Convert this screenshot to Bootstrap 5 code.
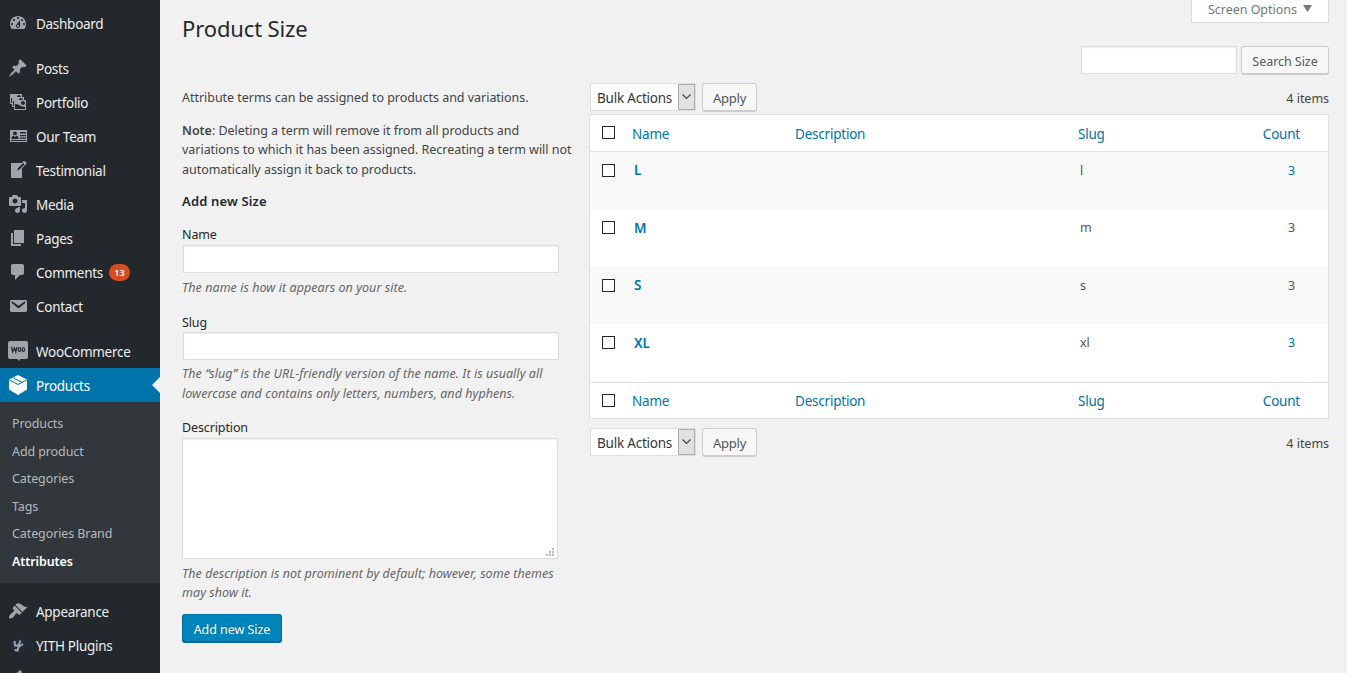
<!DOCTYPE html>
<html lang="en">
<head>
<meta charset="utf-8">
<title>Product Size</title>
<meta name="viewport" content="width=device-width, initial-scale=1">
<link href="https://cdn.jsdelivr.net/npm/bootstrap@5.3.0/dist/css/bootstrap.min.css" rel="stylesheet">
<style>
body{background:#f1f1f1;color:#444;font-family:"Noto Sans","Open Sans",sans-serif;font-size:12.5px;line-height:19.5px;letter-spacing:-.03px;height:673px;overflow:hidden}
a{text-decoration:none;color:#0073aa}
.side{width:160px;height:673px;background:#23282d;padding-top:6px;overflow:hidden}
.side .item{height:34px;padding:4px 0 0 8px;color:#eee;font-size:13.5px;letter-spacing:-.28px;position:relative}
.side .item svg{width:20px;height:20px;fill:#a0a5aa;margin:-4px 8px 0 0;flex:none}
.side .gap{margin-top:11px}
.side .current{background:#0073aa;color:#fff}
.side .current svg{fill:#fff}
.side .current::after{content:"";position:absolute;right:0;top:9px;border:8px solid transparent;border-left:0;border-right-color:#f1f1f1}
.sub{background:#32373c;height:181px;padding:8px 12px 0}
.sub a{height:27.6px;line-height:27px;color:#b4b9be;letter-spacing:-.1px}
.sub a.on{color:#fff;font-weight:600}
.count{background:#d54e21;color:#fff;font-size:9px;font-weight:600;line-height:17px;width:21px;letter-spacing:0;margin:-3px 0 0 6px}
.main{padding:0 18px 0 22px}
.opts{width:138px;height:23px;background:#fff;border:1px solid #ddd;border-top:0;color:#72777c;padding:0 16px;box-shadow:0 1px 1px -1px rgba(0,0,0,.1)}
h1{font-size:22px;line-height:29px;font-weight:400;color:#23282d;letter-spacing:-.13px;margin:14px 0 0}
.wpfield{background:#fff;border:1px solid #ddd;border-radius:0;box-shadow:inset 0 1px 2px rgba(0,0,0,.07);display:block;padding:2px 5px;outline:0}
.formcol{width:408px}
.formcol .wpfield{width:376px}
.formcol label{color:#23282d;display:block;height:20px;line-height:21px;letter-spacing:-.12px}
.formcol i{color:#666;display:block;white-space:nowrap;letter-spacing:.05px}
.wpbtn{height:29px;border:1px solid #ccc;border-bottom-width:2px;border-radius:3px;background:#f7f7f7;color:#555;font-size:12.5px;letter-spacing:-.05px;line-height:27px;padding:1px 0 0;flex:none}
.wpbtn.blue{background:#0085ba;border-color:#0073aa #006799 #006799;color:#fff;text-shadow:0 -1px 1px #006799;width:100px}
.wpbtn.apply{width:55px;font-size:13px;letter-spacing:-.22px}
.bulk{width:106px;height:28px;background:#fff;border:1px solid #ddd;color:#32373c;font-size:13.5px;letter-spacing:-.22px;padding-left:6px;margin-right:6px;margin-left:1px}
.bulk b{font-weight:400;padding-top:3px}
.bulk span{width:17px;height:26px;background:#e1e1e1;border:1px solid #adadad}
.terms{width:740px;table-layout:fixed;background:#fff;border:1px solid #e1e1e1;border-collapse:separate;border-spacing:0;margin:0;color:#555}
.terms th,.terms td{padding:0;vertical-align:top;font-weight:400}
.terms th,.terms td.t{font-size:13.5px;letter-spacing:-.22px}
.terms thead th{height:37px;border-bottom:1px solid #e1e1e1;padding-top:10px}
.terms tfoot th{height:36px;border-top:1px solid #e1e1e1;padding-top:9px}
.terms td{height:57px;padding-top:9px}
.terms tr.tall td{height:58px}
.terms tr.tall td.t{padding-top:10px}
.terms tbody tr:nth-child(odd) td{background:#f9f9f9}
.terms td.t{padding-left:2px;font-weight:600}
.terms .s{padding-left:2px}
.terms .n{padding-right:33px}
.cb{appearance:none;display:block;width:13px;height:13px;border:1px solid #23282d;background:#fff;margin:3px 0 0 12px}
thead .cb{margin-top:1px}
tfoot .cb{margin-top:2px}
</style>
</head>
<body>
<div class="d-flex">
<nav class="side flex-shrink-0">
  <a href="#" class="item d-flex align-items-center"><svg viewBox="0 0 20 20"><path d="M3.760 16h12.480c1.100-1.370 1.760-3.110 1.760-5 0-4.420-3.580-8-8-8s-8 3.580-8 8c0 1.890.66 3.630 1.760 5zM10 4c.55 0 1 .45 1 1s-.45 1-1 1-1-.45-1-1 .45-1 1-1zM6 6c.55 0 1 .45 1 1s-.45 1-1 1-1-.45-1-1 .45-1 1-1zm8 0c.55 0 1 .45 1 1s-.45 1-1 1-1-.45-1-1 .45-1 1-1zm-5.370 5.550L12 7v6c0 1.100-.9 2-2 2s-2-.9-2-2c0-.57.24-1.080.63-1.450zM4 10c.55 0 1 .45 1 1s-.45 1-1 1-1-.45-1-1 .45-1 1-1zm12 0c.55 0 1 .45 1 1s-.45 1-1 1-1-.45-1-1 .45-1 1-1zm-5 3c0-.55-.45-1-1-1s-1 .45-1 1 .45 1 1 1 1-.45 1-1z" fill-rule="evenodd"/></svg>Dashboard</a>
  <a href="#" class="item gap d-flex align-items-center"><svg viewBox="0 0 20 20"><path d="M10.440 3.020l1.820-1.820 6.360 6.350-1.830 1.820c-1.050-.68-2.480-.57-3.410.36l-.75.75c-.92.93-1.040 2.350-.35 3.410l-1.830 1.820-2.410-2.410-2.800 2.790c-.42.42-3.380 2.710-3.800 2.290s1.860-3.390 2.280-3.810l2.790-2.790L4.100 9.360l1.830-1.820c1.050.69 2.480.57 3.400-.36l.75-.75c.93-.92 1.050-2.350.36-3.410z"/></svg>Posts</a>
  <a href="#" class="item d-flex align-items-center"><svg viewBox="0 0 20 20"><path fill-rule="evenodd" d="M4 15v-3H2V2h12v3h2v3h2v10H6v-3H4zm7-12c-1.100 0-2 .9-2 2h4c0-1.100-.89-2-2-2zm-7 8V6H3v5h1zm7-3h4c0-1.100-.89-2-2-2-1.100 0-2 .9-2 2zm-5 6V9H5v5h1zm9-1c1.100 0 2-.89 2-2 0-1.100-.9-2-2-2s-2 .9-2 2c0 1.110.9 2 2 2zm2 4v-2c-5 0-5-3-10-3v5h10z"/></svg>Portfolio</a>
  <a href="#" class="item d-flex align-items-center"><svg viewBox="0 0 20 20"><path fill-rule="evenodd" d="M2 4h17v12H2zM12 6v1.500h6V6zM12 9v1.200h6V9zM12 11.500v1.200h6v-1.200zM3 14v1h15v-1z"/><g fill="#23282d"><circle cx="7" cy="7.300" r="1.900"/><path d="M3.500 13v-2l2-1.500L7 11l1.500-1.500 2 1.500v2z"/></g></svg>Our Team</a>
  <a href="#" class="item d-flex align-items-center"><svg viewBox="0 0 20 20"><path fill-rule="evenodd" d="M16.890 1.200l1.410 1.410c.39.39.39 1.020 0 1.410L14 8.330V18H3V3h10.670l1.800-1.800c.4-.39 1.030-.4 1.420 0zm-5.660 8.480l5.370-5.360-1.420-1.420-5.360 5.370-.71 2.120z"/></svg>Testimonial</a>
  <a href="#" class="item d-flex align-items-center"><svg viewBox="0 0 20 20"><path fill-rule="evenodd" d="M13 11V4c0-.55-.45-1-1-1h-1.670L9 1H5L3.670 3H2c-.55 0-1 .45-1 1v7c0 .55.45 1 1 1h10c.55 0 1-.45 1-1zM7 4.500c1.380 0 2.500 1.120 2.500 2.500S8.380 9.500 7 9.500 4.500 8.380 4.500 7 5.620 4.500 7 4.500zM14 6h5v10.500c0 1.380-1.120 2.500-2.500 2.500S14 17.880 14 16.500s1.120-2.500 2.500-2.500c.17 0 .34.02.5.05V9h-3V6zm-4 8.050V13h2v3.500c0 1.380-1.120 2.500-2.500 2.500S7 17.880 7 16.500 8.120 14 9.500 14c.17 0 .34.02.5.05z"/></svg>Media</a>
  <a href="#" class="item d-flex align-items-center"><svg viewBox="0 0 20 20"><path d="M6 15V2h10v13H6zm-1 1h8v2H3V5h2v11z"/></svg>Pages</a>
  <a href="#" class="item d-flex align-items-center"><svg viewBox="0 0 20 20"><path d="M5 2h9c1.100 0 2 .9 2 2v7c0 1.100-.9 2-2 2h-2l-5 5v-5H5c-1.100 0-2-.9-2-2V4c0-1.100.9-2 2-2z"/></svg>Comments<span class="count rounded-pill text-center">13</span></a>
  <a href="#" class="item d-flex align-items-center"><svg viewBox="0 0 20 20"><path d="M3.870 4h13.250C18.370 4 19 4.590 19 5.790v8.420c0 1.190-.63 1.790-1.880 1.790H3.870c-1.250 0-1.880-.6-1.880-1.790V5.790c0-1.200.63-1.790 1.880-1.790zm6.620 8.600l6.740-5.530c.24-.2.43-.66.13-1.070-.29-.41-.82-.42-1.170-.17l-5.700 3.860L4.800 5.830c-.35-.25-.88-.24-1.170.17-.3.41-.11.87.13 1.070z" fill-rule="evenodd"/></svg>Contact</a>
  <a href="#" class="item gap d-flex align-items-center"><svg viewBox="0 0 20 20"><path d="M2 0h16a2 2 0 0 1 2 2v14a2 2 0 0 1-2 2h-6v2l-3-2H2a2 2 0 0 1-2-2V2a2 2 0 0 1 2-2z"/><g fill="none" stroke="#23282d" stroke-width="1.200"><path d="M3.500 6l1.200 5L6.500 7l1.300 4L9 6"/><ellipse cx="11.500" cy="8.500" rx="1.200" ry="2"/><ellipse cx="15.300" cy="8.500" rx="1.200" ry="2"/></g></svg>WooCommerce</a>
  <a href="#" class="item current d-flex align-items-center"><svg viewBox="0 0 20 20"><path d="M10 0l9 4.500v10L10 20l-9-5.500v-10z"/><path d="M1.500 5L10 9.500 18.500 5M5.500 3l9 4.500" fill="none" stroke="#0073aa"/></svg>Products</a>
  <div class="sub d-flex flex-column">
    <a href="#">Products</a><a href="#">Add product</a><a href="#">Categories</a><a href="#">Tags</a><a href="#">Categories Brand</a><a href="#" class="on">Attributes</a>
  </div>
  <a href="#" class="item gap d-flex align-items-center"><svg viewBox="0 0 20 20"><path d="M14.480 11.060L7.410 3.990l1.500-1.500c.5-.56 2.300-.47 3.510.32 1.210.8 1.430 1.280 2.910 2.100 1.180.64 2.450 1.260 4.450.85zm-.71.71L6.700 4.700 4.930 6.470c-.39.39-.39 1.020 0 1.410l1.060 1.060c.39.39.39 1.030 0 1.420-.6.6-1.430 1.110-2.210 1.690-.35.26-.7.53-1.010.84C1.430 14.230.4 16.080 1.400 17.070c.99 1 2.840-.03 4.180-1.360.31-.31.58-.66.85-1.020.57-.78 1.080-1.610 1.690-2.210.39-.39 1.020-.39 1.410 0l1.060 1.060c.39.39 1.020.39 1.410 0z"/></svg>Appearance</a>
  <a href="#" class="item d-flex align-items-center"><svg viewBox="0 0 20 20"><circle cx="10" cy="10.500" r="7.500" fill="#1f2d3c"/><path d="M6.500 6L7 10.500h3.500L12.500 5.500M11 9.500L9.500 15.500l-3-.5M10.500 12l4.500-3" fill="none" stroke="#a0a5aa" stroke-width="2"/></svg>YITH Plugins</a>
  <a href="#" class="item d-flex align-items-center"><svg viewBox="0 0 20 20"><path d="M11 2l1-1 2 2v5H6V6z"/></svg></a>
</nav>

<main class="main flex-grow-1">
  <div class="d-flex justify-content-between" style="height:46px">
    <h1>Product Size</h1>
    <div class="opts d-flex justify-content-between"><span>Screen Options</span><svg width="9" height="7" style="margin-top:5px"><path d="M0 0h9L4.500 7z" fill="#72777c"/></svg></div>
  </div>
  <div class="d-flex justify-content-end" style="height:37px">
    <input class="wpfield" style="width:156px;height:28px;margin-right:4px" type="search">
    <button class="wpbtn" style="width:88px">Search Size</button>
  </div>
  <div class="d-flex">
    <section class="formcol flex-shrink-0">
      <p style="margin:5px 0 13px">Attribute terms can be assigned to products and variations.</p>
      <p class="text-nowrap" style="margin:0 0 12px"><span class="fw-semibold">Note</span>: Deleting a term will remove it from all products and<br>variations to which it has been assigned. Recreating a term will not<br>automatically assign it back to products.</p>
      <h2 style="font-size:13px;letter-spacing:.15px;line-height:20px;font-weight:600;color:#23282d;margin:0 0 13px">Add new Size</h2>
      <label>Name</label>
      <input class="wpfield" style="height:28px;margin:1px 0 5px 1px">
      <i>The name is how it appears on your site.</i>
      <label style="margin-top:14px">Slug</label>
      <input class="wpfield" style="height:28px;margin:.5px 0 4px 1px">
      <i>The “slug” is the URL-friendly version of the name. It is usually all<br>lowercase and contains only letters, numbers, and hyphens.</i>
      <label style="margin-top:14px">Description</label>
      <div class="wpfield d-flex justify-content-end align-items-end" style="height:121px;margin:1px 0 4.5px;padding:2px 3px 2px 2px"><svg width="8" height="8" fill="#bbb"><path d="M6 0h2v2H6zM3 3h2v2H3zM6 3h2v2H6zM0 6h2v2H0zM3 6h2v2H3zM6 6h2v2H6z"/></svg></div>
      <i>The description is not prominent by default; however, some themes<br>may show it.</i>
      <button class="wpbtn blue" style="margin-top:11.5px">Add new Size</button>
    </section>
    <section class="flex-shrink-0" style="margin-left:-1px">
      <div class="d-flex" style="height:31px">
        <div class="bulk d-flex align-items-center justify-content-between"><b>Bulk Actions</b><span class="d-flex align-items-center justify-content-center"><svg width="9" height="6"><path d="M.5.500l4 4 4-4" fill="none" stroke="#444" stroke-width="1.200"/></svg></span></div>
        <button class="wpbtn apply">Apply</button>
        <span class="ms-auto" style="padding-top:6px">4 items</span>
      </div>
      <table class="terms">
        <colgroup><col style="width:42px"><col style="width:163px"><col style="width:283px"><col style="width:120px"><col></colgroup>
        <thead><tr><th><input type="checkbox" class="cb"></th><th><a href="#">Name</a></th><th><a href="#">Description</a></th><th><a href="#">Slug</a></th><th class="text-end" style="padding-right:28px"><a href="#">Count</a></th></tr></thead>
        <tbody>
          <tr><td><input type="checkbox" class="cb"></td><td class="t"><a href="#">L</a></td><td></td><td class="s">l</td><td class="n text-end"><a href="#">3</a></td></tr>
          <tr class="tall"><td><input type="checkbox" class="cb"></td><td class="t"><a href="#">M</a></td><td></td><td class="s">m</td><td class="n text-end">3</td></tr>
          <tr><td><input type="checkbox" class="cb"></td><td class="t"><a href="#">S</a></td><td></td><td class="s">s</td><td class="n text-end">3</td></tr>
          <tr class="tall"><td><input type="checkbox" class="cb"></td><td class="t"><a href="#">XL</a></td><td></td><td class="s">xl</td><td class="n text-end"><a href="#">3</a></td></tr>
        </tbody>
        <tfoot><tr><th><input type="checkbox" class="cb"></th><th><a href="#">Name</a></th><th><a href="#">Description</a></th><th><a href="#">Slug</a></th><th class="text-end" style="padding-right:28px"><a href="#">Count</a></th></tr></tfoot>
      </table>
      <div class="d-flex" style="margin-top:9px">
        <div class="bulk d-flex align-items-center justify-content-between"><b>Bulk Actions</b><span class="d-flex align-items-center justify-content-center"><svg width="9" height="6"><path d="M.5.500l4 4 4-4" fill="none" stroke="#444" stroke-width="1.200"/></svg></span></div>
        <button class="wpbtn apply">Apply</button>
        <span class="ms-auto" style="padding-top:6px">4 items</span>
      </div>
    </section>
  </div>
</main>
</div>
<script src="https://cdn.jsdelivr.net/npm/bootstrap@5.3.0/dist/js/bootstrap.bundle.min.js"></script>
</body>
</html>
